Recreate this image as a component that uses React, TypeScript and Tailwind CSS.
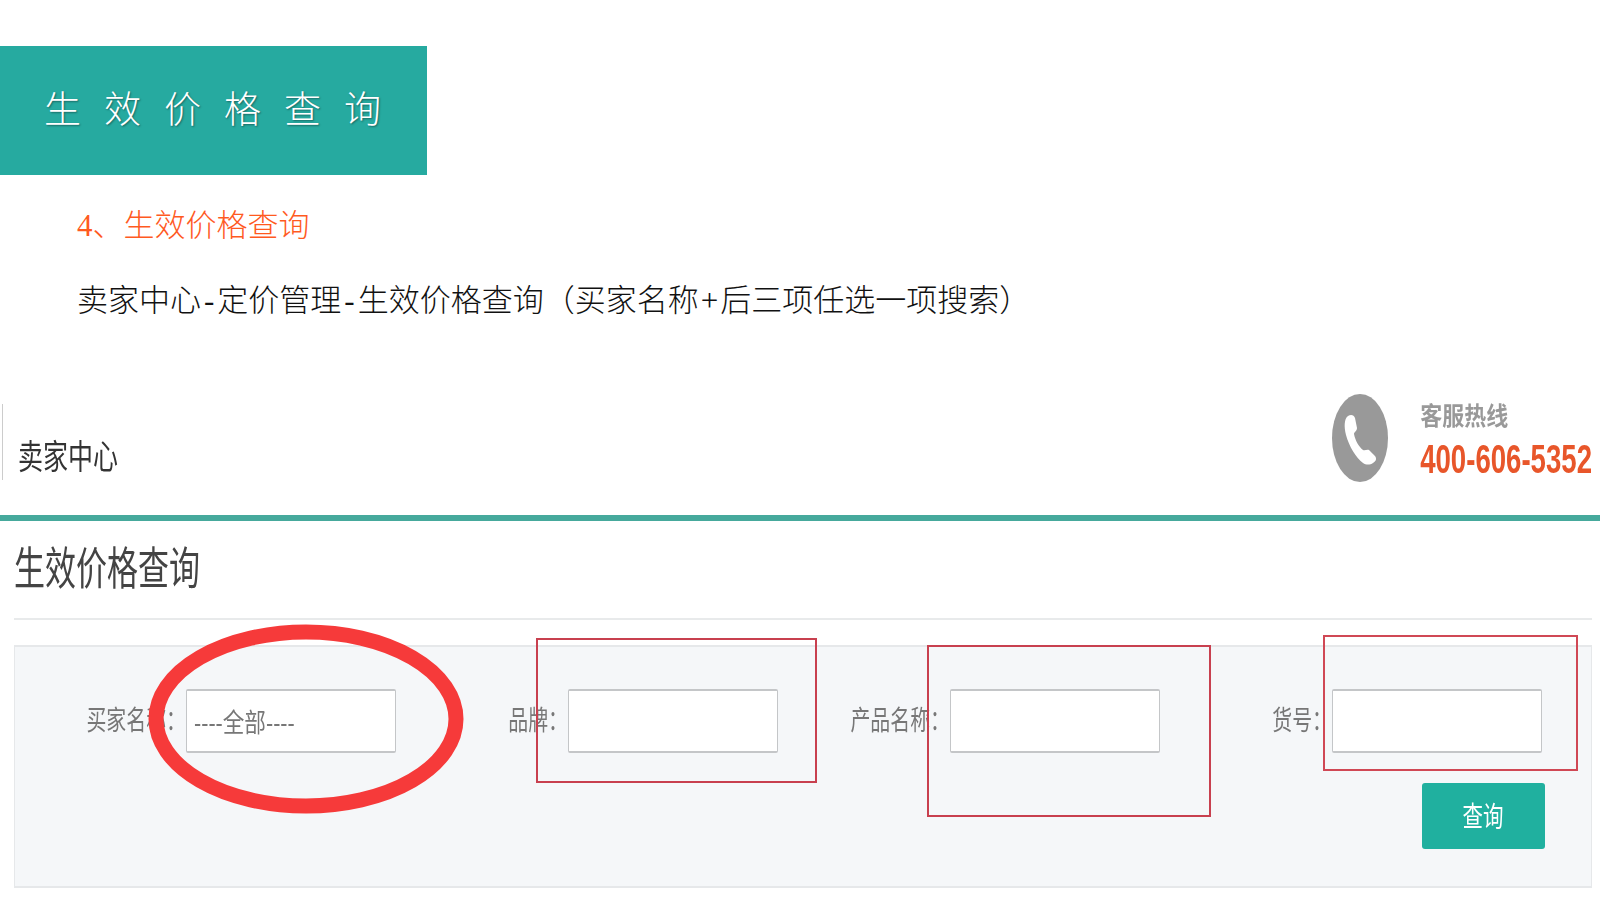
const cjk = "font-['Liberation_Sans','Noto_Sans_CJK_SC',sans-serif]";
const serif = "font-['Liberation_Serif','Noto_Sans_CJK_SC',serif]";

const fields = [
  { label: "买家名称：", value: "----全部----" },
  { label: "品牌：", value: "" },
  { label: "产品名称：", value: "" },
  { label: "货号：", value: "" },
];

function PhoneIcon() {
  return (
    <svg width="56" height="88" viewBox="0 0 56 88" className="shrink-0">
      <ellipse cx="28" cy="44" rx="28" ry="44" fill="#999999" />
      <path
        d="M16 22c3-2 6-1 7 2l2 10c0 3-3 4-3 6 1 6 5 13 9 16 2 1 4-1 6 0l6 6c2 3 1 5-2 7-3 2-7 2-10 0-7-5-14-17-17-28-2-8-2-16 2-19z"
        fill="#ffffff"
      />
    </svg>
  );
}

function Field({ label, value }: { label: string; value: string }) {
  return (
    <div className="flex items-center justify-end">
      <span className="origin-right scale-x-[0.83] scale-y-[1.15] text-[24px] whitespace-nowrap text-[#777777] blur-[0.4px]">
        {label}
      </span>
      <div className="flex h-[64px] w-[210px] items-center rounded-[2px] border border-t-2 border-b-2 border-[#c4c6c8] bg-white pl-[7px] text-[24px] text-[#777777] blur-[0.2px]">
        <span className="mt-[3px] origin-left scale-x-[0.9] scale-y-[1.1] whitespace-nowrap">{value}</span>
      </div>
    </div>
  );
}

export default function App() {
  return (
    <div className={`relative h-[900px] w-[1600px] overflow-hidden bg-white ${cjk}`}>
      <div className="h-[46px]" />
      <div
        className={`flex h-[129px] w-[427px] items-center gap-[23px] bg-[#26aaa0] pl-[44px] text-[37px] font-light text-white [text-shadow:1px_1px_2px_rgba(0,0,0,0.4)] ${serif}`}
      >
        {"生效价格查询".split("").map((ch) => (
          <span key={ch}>{ch}</span>
        ))}
      </div>

      <div className={`${serif} mt-[31px] pl-[77px] text-[31px] leading-[40px] font-light text-[#ff5a1f]`}>
        4、生效价格查询
      </div>
      <div className={`${serif} mt-[35px] pl-[77px] text-[31px] leading-[40px] font-light whitespace-nowrap text-[#111111]`}>
        卖家中心<span className="mx-[3px]">-</span>定价管理<span className="mx-[3px]">-</span>
        生效价格查询（买家名称<span className="mx-[2px]">+</span>后三项任选一项搜索）
      </div>

      {/* pasted screenshot of the seller page */}
      <div className="mt-[72px] flex h-[122px] items-start justify-between">
        <div className="mt-[11px] ml-[2px] flex h-[76px] items-center border-l border-[#cccccc] pl-[15px]">
          <span className="mt-[32px] origin-left scale-y-[1.35] text-[25px] whitespace-nowrap text-[#333333] blur-[0.3px]">
            卖家中心
          </span>
        </div>
        <div className="mr-[8px] flex items-start gap-[32px] pt-[1px]">
          <PhoneIcon />
          <div className="flex flex-col">
            <span className="mt-[6px] origin-left scale-y-[1.15] text-[22px] font-bold text-[#999999] blur-[0.4px]">
              客服热线
            </span>
            <span className="mt-[11px] origin-left scale-y-[1.45] text-[27.6px] leading-[32px] font-bold text-[#e8562a] blur-[0.3px]">
              400-606-5352
            </span>
          </div>
        </div>
      </div>

      <div className="h-[6px] bg-[#46a99c]" />

      <div className="mr-[8px] ml-[14px] h-[99px] border-b-2 border-[#e8eaeb] pt-[26px]">
        <span className="block origin-left scale-y-[1.45] text-[31px] leading-[46px] text-[#444444] blur-[0.4px]">
          生效价格查询
        </span>
      </div>

      <div className="mt-[25px] mr-[8px] ml-[14px] h-[243px] border border-t-2 border-b-2 border-[#e6e8ea] bg-[#f5f7f9] pt-[42px]">
        <div className="grid grid-cols-[381px_382px_382px_382px]">
          {fields.map((f) => (
            <Field key={f.label} label={f.label} value={f.value} />
          ))}
        </div>
        <div className="mt-[30px] flex justify-end pr-[46px]">
          <button className="flex h-[66px] w-[123px] items-center justify-center rounded-[3px] bg-[#20b09f] pt-[4px] text-[25px] text-white blur-[0.3px]">
            <span className="scale-x-[0.82] scale-y-[1.15]">查询</span>
          </button>
        </div>
      </div>

      {/* hand drawn annotations over the screenshot */}
      <svg width="320" height="196" viewBox="0 0 320 196" className="absolute top-[621px] left-[146px]">
        <ellipse cx="160" cy="98" rx="150" ry="87" fill="none" stroke="#f63a3a" strokeWidth="15" />
      </svg>
      <div className="absolute top-[638px] left-[536px] h-[145px] w-[281px] border-2 border-[#c8404f]" />
      <div className="absolute top-[645px] left-[927px] h-[172px] w-[284px] border-2 border-[#c8404f]" />
      <div className="absolute top-[635px] left-[1323px] h-[136px] w-[255px] border-2 border-[#d04855]" />
    </div>
  );
}
